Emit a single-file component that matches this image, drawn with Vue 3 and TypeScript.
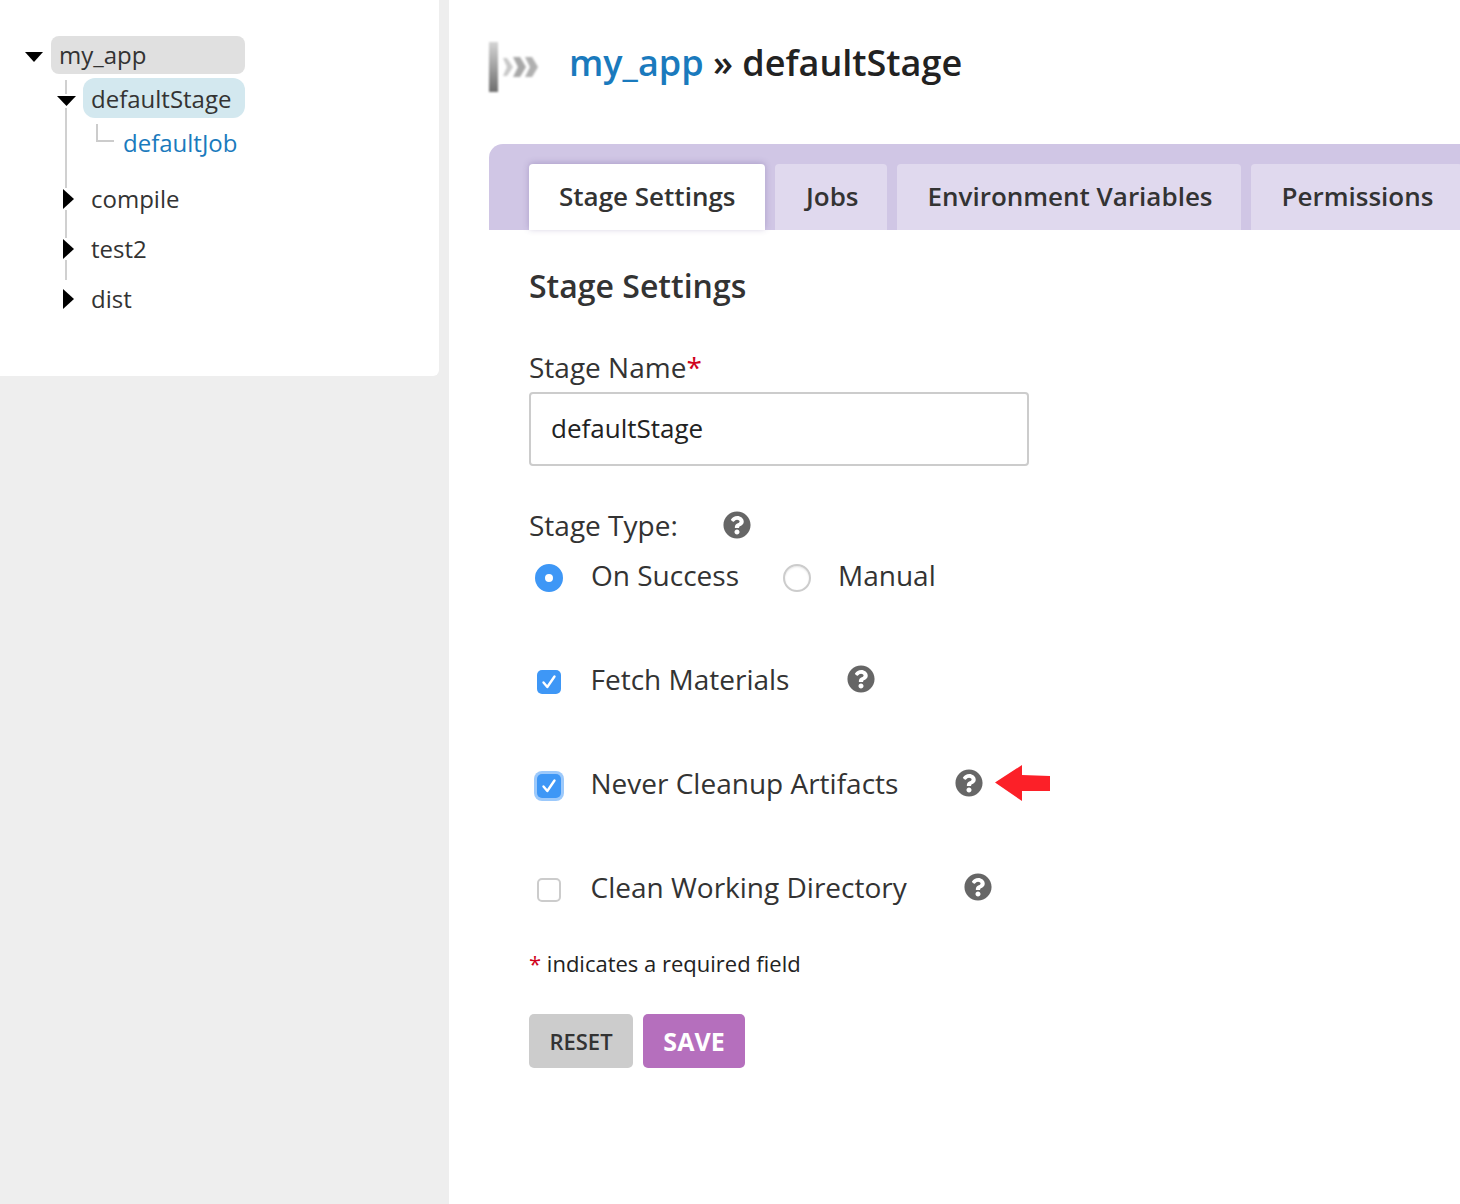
<script setup lang="ts">
const tabs: string[] = ['Jobs', 'Environment Variables', 'Permissions']
const helpPath = 'M504 256c0 136.997-111.043 248-248 248S8 392.997 8 256C8 119.083 119.043 8 256 8s248 111.083 248 248zM262.655 90c-54.497 0-89.255 22.957-116.549 63.758-3.536 5.286-2.353 12.415 2.715 16.258l34.699 26.31c5.205 3.947 12.621 3.008 16.665-2.122 17.864-22.658 30.113-35.797 57.303-35.797 20.429 0 45.698 13.148 45.698 32.958 0 14.976-12.363 22.667-32.534 33.976C247.128 238.528 216 254.941 216 296v4c0 6.627 5.373 12 12 12h56c6.627 0 12-5.373 12-12v-1.333c0-28.462 83.186-29.647 83.186-106.667 0-58.002-60.165-102-116.531-102zM256 338c-25.365 0-46 20.635-46 46 0 25.364 20.635 46 46 46s46-20.636 46-46c0-25.365-20.635-46-46-46z'
const stages: string[] = ['compile', 'test2', 'dist']
</script>

<template>
  <div class="page">
    <aside class="side">
      <div class="card">
        <div class="tree-row root-row">
          <svg class="caret-down root-caret" width="18" height="10" viewBox="0 0 18 10"><path d="M0 0h18L9 10z" /></svg>
          <span class="pill grey"><span class="root-name">my_app</span></span>
        </div>
        <div class="branch">
          <span class="trunk"></span>
          <div class="tree-row stage-row">
            <svg class="caret-down stage-caret" width="19" height="10" viewBox="0 0 19 10"><path d="M0 0h19L9.500 10z" /></svg>
            <span class="pill blue">defaultStage</span>
          </div>
          <div class="job-row">
            <span class="elbow"></span>
            <span class="job">defaultJob</span>
          </div>
          <div v-for="s in stages" :key="s" class="tree-row closed-row">
            <svg class="caret-right" width="11" height="20" viewBox="0 0 11 20"><path d="M0 0l11 10L0 20z" /></svg>
            <span class="closed-name">{{ s }}</span>
          </div>
        </div>
      </div>
    </aside>

    <main class="main">
      <header class="title-row">
        <svg class="logo" width="50" height="50" viewBox="0 0 50 50">
          <defs>
            <linearGradient id="bar" x1="0" y1="0" x2="0" y2="1">
              <stop offset="0" stop-color="#d4d4d4" />
              <stop offset="1" stop-color="#6e6e6e" />
            </linearGradient>
          </defs>
          <rect x="0" y="0" width="9" height="50" fill="url(#bar)" />
          <path d="M14 16h4l6 9-6 9h-4l4-9z" fill="#c8c8c8" />
          <path d="M24 15h7l6 10-6 10h-7l5-10z" fill="#a8a8a8" />
          <path d="M36 15h7l6 10-6 10h-7l5-10z" fill="#b0b0b0" />
        </svg>
        <h1 class="title"><span class="crumb">my_app</span> » defaultStage</h1>
      </header>

      <nav class="tabs">
        <span class="tab active">Stage Settings</span>
        <span v-for="t in tabs" :key="t" class="tab">{{ t }}</span>
      </nav>

      <section class="form">
        <h2 class="heading">Stage Settings</h2>
        <div class="name-label">Stage Name<span class="req">*</span></div>
        <div class="input">defaultStage</div>

        <div class="type-row">
          <span>Stage Type:</span>
          <svg class="help" viewBox="0 0 512 512"><path :d="helpPath" /></svg>
        </div>
        <div class="radio-row">
          <span class="radio on"></span>
          <span class="on-label">On Success</span>
          <span class="radio"></span>
          <span class="manual-label">Manual</span>
        </div>

        <div class="check-row fetch">
          <span class="check checked"><svg viewBox="0 0 24 24" width="24" height="24"><path d="M6.500 12.500l3.800 4.500L17.500 6.500" /></svg></span>
          <span class="check-label">Fetch Materials</span>
          <svg class="help fetch-help" viewBox="0 0 512 512"><path :d="helpPath" /></svg>
        </div>
        <div class="check-row">
          <span class="check checked focus"><svg viewBox="0 0 24 24" width="24" height="24"><path d="M6.500 12.500l3.800 4.500L17.500 6.500" /></svg></span>
          <span class="check-label">Never Cleanup Artifacts</span>
          <svg class="help never-help" viewBox="0 0 512 512"><path :d="helpPath" /></svg>
          <svg class="arrow" width="55" height="36" viewBox="0 0 55 36"><path d="M0 17.500L27 0v10l28 1v15H27v10z" /></svg>
        </div>
        <div class="check-row">
          <span class="check"></span>
          <span class="check-label">Clean Working Directory</span>
          <svg class="help clean-help" viewBox="0 0 512 512"><path :d="helpPath" /></svg>
        </div>

        <p class="note"><span class="req">*</span> indicates a required field</p>

        <div class="buttons">
          <button class="btn reset" type="button">RESET</button>
          <button class="btn save" type="button">SAVE</button>
        </div>
      </section>
    </main>
  </div>
</template>

<style>
html, body { margin: 0; background: #fff; }
</style>

<style scoped>
.page {
  display: flex;
  width: 1460px;
  height: 1204px;
  overflow: hidden;
  font-family: "Open Sans", "Liberation Sans", sans-serif;
  color: #333;
  background: #fff;
}
.side { width: 449px; flex: none; background: #eee; }
.card {
  width: 439px;
  height: 376px;
  box-sizing: border-box;
  padding: 36px 0 0 25px;
  background: #fff;
  border-radius: 0 0 6px 0;
}
.tree-row { display: flex; align-items: center; }
.root-row { gap: 8px; height: 38px; }
.root-caret { position: relative; top: 2px; }
.root-name { position: relative; top: -1px; }
.pill {
  display: flex;
  align-items: center;
  box-sizing: border-box;
  width: 194px;
  font-size: 24px;
  border-radius: 8px;
}
.grey { height: 38px; padding: 0 8px; background: #e0e0e0; }
.blue { width: 162px; height: 40px; padding: 0 8px; background: #d3e8ef; border-radius: 12px; }
.caret-down path, .caret-right path { fill: #000; }
.branch { position: relative; margin-top: 4px; padding-left: 32px; }
.trunk {
  position: absolute;
  left: 40px;
  top: 2px;
  width: 2px;
  height: 200px;
  background: #d0d0d0;
}
.stage-row { gap: 7px; height: 40px; }
.stage-caret { position: relative; top: 3px; background: #fff; padding: 2px 0; }
.job-row { display: flex; align-items: center; height: 50px; padding-left: 39px; gap: 9px; }
.elbow {
  width: 18px;
  height: 18px;
  margin-top: -20px;
  border-left: 2px solid #ccc;
  border-bottom: 2px solid #ccc;
  box-sizing: border-box;
}
.job { font-size: 24px; color: #1a7abd; margin-top: -2px; }
.closed-row { height: 50px; padding-left: 6px; gap: 17px; }
.job-row + .closed-row { margin-top: 6px; }
.caret-right { position: relative; background: #fff; padding: 1px 0; }
.closed-name { font-size: 24px; position: relative; top: -1px; }

.main { flex: 1; min-width: 0; padding-left: 40px; }
.title-row { display: flex; align-items: center; gap: 30px; height: 50px; padding-top: 42px; }
.logo { flex: none; filter: blur(0.8px); }
.title { margin: 0; font-size: 36px; line-height: 50px; font-weight: 600; color: #222; white-space: nowrap; margin-top: -8px; }
.crumb { color: #1a7abd; }
.tabs {
  display: flex;
  gap: 10px;
  height: 66px;
  margin-top: 52px;
  padding: 20px 0 0 40px;
  background: #d0c6e5;
  border-radius: 14px 0 0 0;
}
.tab {
  flex: none;
  padding: 0 28.5px 0 30.5px;
  font-size: 26px;
  font-weight: 600;
  line-height: 64px;
  height: 66px;
  background: #e0d9ee;
  border-radius: 4px 4px 0 0;
  white-space: nowrap;
}
.tab.active { padding: 0 30px; background: #fff; box-shadow: 0 -1px 6px rgba(90, 70, 140, 0.3); }

.form { padding-left: 40px; position: relative; background: #fff; }
.heading { margin: 35px 0 0; font-size: 32px; line-height: 42px; font-weight: 600; }
.name-label { margin-top: 42px; font-size: 28px; line-height: 36px; }
.req { color: #d0021b; }
.input {
  box-sizing: border-box;
  width: 500px;
  height: 74px;
  margin-top: 7px;
  padding-left: 20px;
  border: 2px solid #ccc;
  border-radius: 4px;
  font-size: 26px;
  line-height: 68px;
  color: #222;
}
.type-row { display: flex; align-items: center; gap: 45px; height: 40px; margin-top: 39px; font-size: 28px; }
.help { flex: none; width: 28px; height: 28px; fill: #666; }
.radio-row { display: flex; align-items: center; height: 40px; margin-top: 11px; padding-left: 6px; font-size: 28px; }
.radio {
  flex: none;
  box-sizing: border-box;
  width: 28px;
  height: 28px;
  margin-top: 4px;
  border-radius: 50%;
  border: 2px solid #ccc;
  background: #fff;
  box-shadow: inset 0 1px 2px rgba(0, 0, 0, 0.1);
}
.radio.on { border: 10px solid #3e97f6; box-shadow: none; }
.on-label { margin: -2px 44px 0 28px; }
.manual-label { margin: -2px 0 0 27px; }
.check-row { display: flex; align-items: center; height: 40px; margin-top: 64px; padding-left: 8px; font-size: 28px; }
.check-row.fetch { margin-top: 63px; }
.check {
  flex: none;
  box-sizing: border-box;
  width: 24px;
  height: 24px;
  margin-top: 6px;
  border: 2px solid #ccc;
  border-radius: 5px;
  background: #fff;
}
.check.checked { border: 0; background: #3e97f6; }
.check.focus { box-shadow: 0 0 0 3px #9cc9fb; }
.check svg { display: block; fill: none; stroke: #fff; stroke-width: 2.4; stroke-linecap: round; stroke-linejoin: round; }
.check-label { margin-left: 29.5px; white-space: nowrap; }
.fetch-help { margin-left: 57.5px; }
.never-help { margin-left: 57px; }
.clean-help { margin-left: 57.5px; }
.arrow { margin-left: 12px; fill: #fc2028; }
.note { margin: 41px 0 0; font-size: 22px; line-height: 30px; color: #222; }
.buttons { display: flex; gap: 10px; margin-top: 36px; }
.btn {
  height: 54px;
  padding: 0;
  border: 0;
  border-radius: 5px;
  font-family: inherit;
  font-weight: 600;
}
.reset { width: 104px; font-size: 22px; background: #ccc; color: #333; }
.save { width: 102px; font-size: 25px; font-weight: 700; background: #b56fbd; color: #fff; }
</style>
